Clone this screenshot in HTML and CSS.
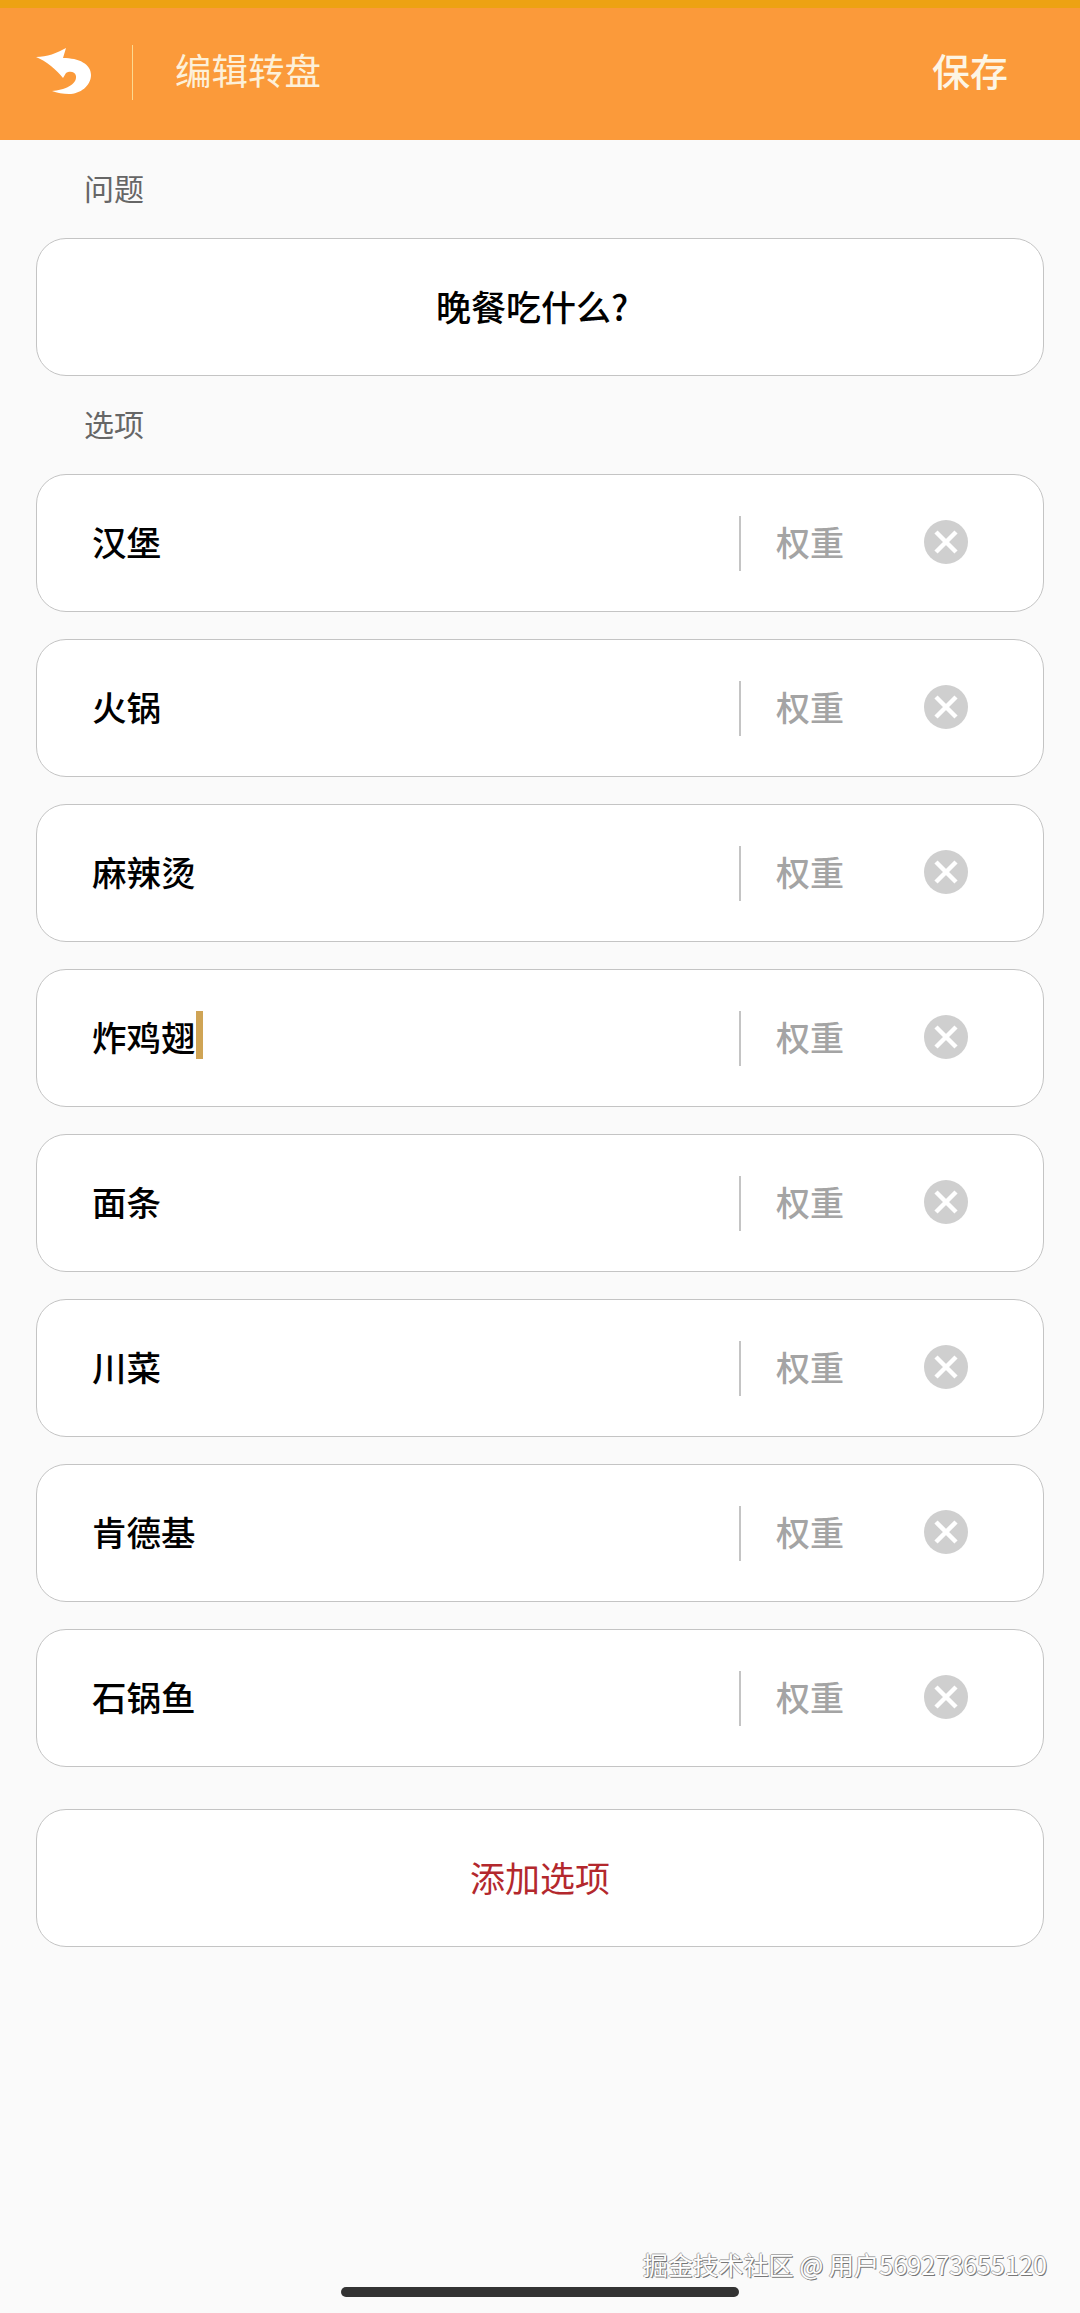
FILE: index.html
```html
<!DOCTYPE html>
<html lang="zh">
<head>
<meta charset="utf-8">
<title>编辑转盘</title>
<link rel="stylesheet" href="styles.css">
</head>
<body>
<div class="page">
  <header class="header">
    <svg class="back" viewBox="0 0 58 52" width="58" height="52"><path fill="#fff" d="M0 11 C11 11 21 7 30 2 L27 12 C43 12 55 18 55 29 C55 40 44 48 33 48 C27 48 21 47 16 45 C28 44 41 39 40 30 C39 25 33 25 30 27 L27 32 C21 24 10 15 0 11 Z"/></svg>
    <span class="header-rule"></span>
    <h1 class="title">编辑转盘</h1>
    <span class="save">保存</span>
  </header>
  <main class="content">
    <div class="label">问题</div>
    <div class="card question">晚餐吃什么?</div>
    <div class="label">选项</div>
    <div class="options">
      <div class="card option"><span class="name">汉堡</span><span class="rule"></span><span class="weight">权重</span><svg class="remove" viewBox="0 0 44 44" width="44" height="44"><circle cx="22" cy="22" r="22" fill="#cfcfcf"/><path d="M12 12 L32 32 M32 12 L12 32" stroke="#fff" stroke-width="4.5" fill="none"/></svg></div>
      <div class="card option"><span class="name">火锅</span><span class="rule"></span><span class="weight">权重</span><svg class="remove" viewBox="0 0 44 44" width="44" height="44"><circle cx="22" cy="22" r="22" fill="#cfcfcf"/><path d="M12 12 L32 32 M32 12 L12 32" stroke="#fff" stroke-width="4.5" fill="none"/></svg></div>
      <div class="card option"><span class="name">麻辣烫</span><span class="rule"></span><span class="weight">权重</span><svg class="remove" viewBox="0 0 44 44" width="44" height="44"><circle cx="22" cy="22" r="22" fill="#cfcfcf"/><path d="M12 12 L32 32 M32 12 L12 32" stroke="#fff" stroke-width="4.5" fill="none"/></svg></div>
      <div class="card option"><span class="name">炸鸡翅<i class="caret"></i></span><span class="rule"></span><span class="weight">权重</span><svg class="remove" viewBox="0 0 44 44" width="44" height="44"><circle cx="22" cy="22" r="22" fill="#cfcfcf"/><path d="M12 12 L32 32 M32 12 L12 32" stroke="#fff" stroke-width="4.5" fill="none"/></svg></div>
      <div class="card option"><span class="name">面条</span><span class="rule"></span><span class="weight">权重</span><svg class="remove" viewBox="0 0 44 44" width="44" height="44"><circle cx="22" cy="22" r="22" fill="#cfcfcf"/><path d="M12 12 L32 32 M32 12 L12 32" stroke="#fff" stroke-width="4.5" fill="none"/></svg></div>
      <div class="card option"><span class="name">川菜</span><span class="rule"></span><span class="weight">权重</span><svg class="remove" viewBox="0 0 44 44" width="44" height="44"><circle cx="22" cy="22" r="22" fill="#cfcfcf"/><path d="M12 12 L32 32 M32 12 L12 32" stroke="#fff" stroke-width="4.5" fill="none"/></svg></div>
      <div class="card option"><span class="name">肯德基</span><span class="rule"></span><span class="weight">权重</span><svg class="remove" viewBox="0 0 44 44" width="44" height="44"><circle cx="22" cy="22" r="22" fill="#cfcfcf"/><path d="M12 12 L32 32 M32 12 L12 32" stroke="#fff" stroke-width="4.5" fill="none"/></svg></div>
      <div class="card option"><span class="name">石锅鱼</span><span class="rule"></span><span class="weight">权重</span><svg class="remove" viewBox="0 0 44 44" width="44" height="44"><circle cx="22" cy="22" r="22" fill="#cfcfcf"/><path d="M12 12 L32 32 M32 12 L12 32" stroke="#fff" stroke-width="4.5" fill="none"/></svg></div>
    </div>
    <div class="card add">添加选项</div>
  </main>
  <div class="watermark">掘金技术社区 @ 用户569273655120</div>
  <div class="home-bar"></div>
</div>
</body>
</html>
```
FILE: styles.css
```css
* { box-sizing: border-box; }
html, body { margin: 0; padding: 0; }
body {
  font-family: "Noto Sans CJK SC", "Noto Sans", sans-serif;
  background: #fafafa;
  color: #000;
}
.page { position: relative; width: 1080px; height: 2313px; overflow: hidden; background: #fafafa; }
.header {
  height: 140px;
  background: #fb9a3a;
  border-top: 8px solid #eda213;
  display: flex;
  align-items: center;
  padding: 0 72px 4px 36px;
  color: #fff;
}
.back { flex: none; }
.header-rule { width: 1px; height: 55px; background: #fcd98f; margin-left: 38px; }
.title { flex: 1; margin: 0 0 4px 42px; font-size: 36.5px; font-weight: 400; line-height: 50px; color: #fdf0d8; }
.save { margin-bottom: 4px; font-size: 38px; font-weight: 500; line-height: 50px; color: #fdf5e4; }
.content { padding: 0 36px; }
.label { height: 98px; padding: 0 0 0 48px; font-size: 30px; line-height: 94px; color: #666; }
.card { background: #fff; border: 1px solid #c4c4c4; border-radius: 30px; height: 138px; }
.question { display: flex; align-items: center; justify-content: center; padding: 0 16px 3px 0; font-size: 35px; font-weight: 500; }
.options { display: flex; flex-direction: column; gap: 27px; }
.option { display: flex; align-items: center; padding: 0 75px 0 55px; }
.name { flex: 1; display: flex; align-items: center; padding-bottom: 5px; font-size: 34.5px; font-weight: 500; line-height: 48px; }
.caret { width: 7px; height: 48px; background: #cfa455; margin-bottom: 1px; }
.rule { width: 2px; height: 55px; background: #c4c4c4; }
.weight { margin-left: 35px; padding-bottom: 3px; font-size: 34px; font-weight: 500; line-height: 48px; color: #a4a4a4; }
.remove { flex: none; margin-left: 80px; margin-bottom: 2px; }
.add { margin-top: 42px; display: flex; align-items: center; justify-content: center; padding-bottom: 3px; font-size: 35px; color: #b3282d; }
.watermark {
  position: absolute; right: 33px; top: 2245px;
  font-size: 25.2px; line-height: 38px; white-space: nowrap;
  color: #fff;
  text-shadow: 1px 1px 0 #777, -1px 0 0 #aaa, 0 -1px 0 #aaa;
}
.home-bar { position: absolute; left: 341px; top: 2287px; width: 398px; height: 10px; border-radius: 5px; background: #333; }
```
